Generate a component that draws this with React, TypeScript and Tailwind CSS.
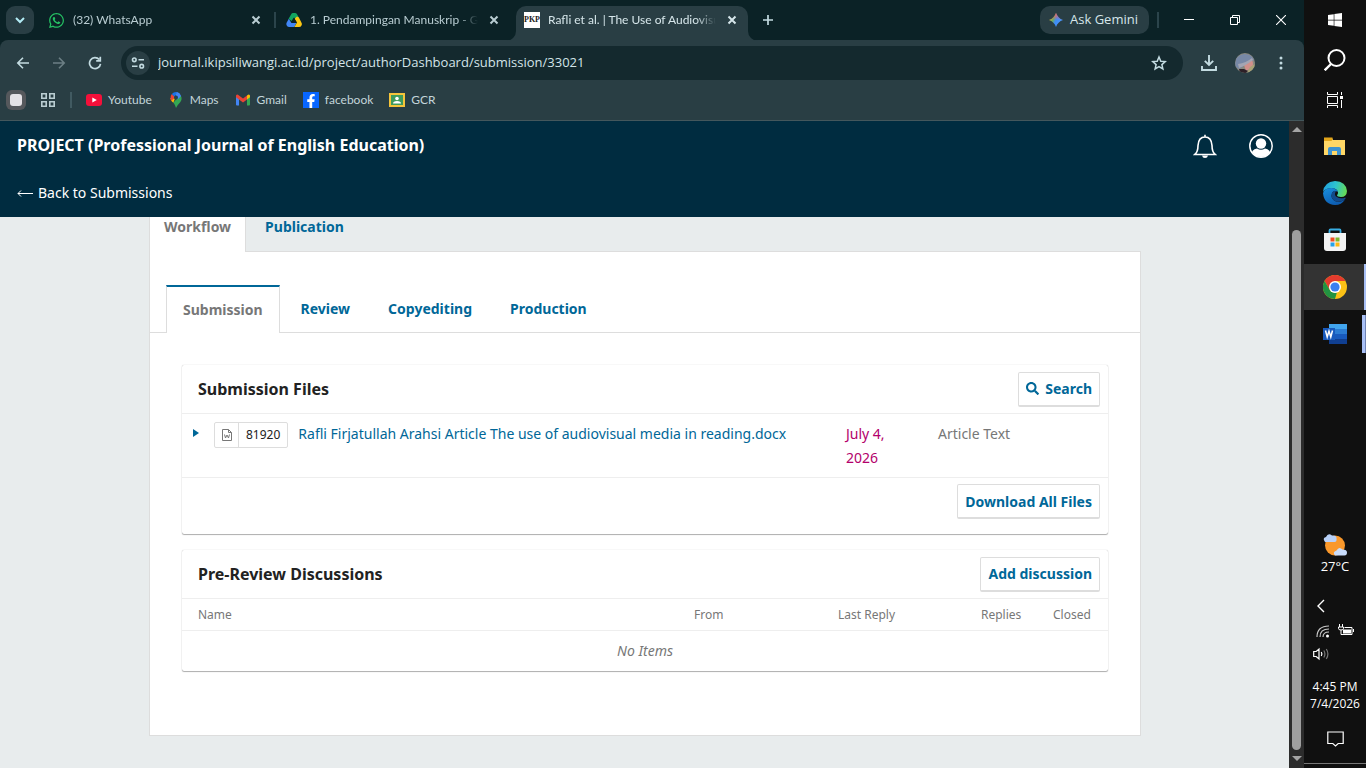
import type { ReactNode } from 'react';
import { FaWhatsapp, FaWindows, FaFacebookF, FaSearch } from 'react-icons/fa';

const ui = "font-['Open_Sans','Noto_Sans',sans-serif]";

function CloseX() {
  return (
    <svg viewBox="0 0 16 16" className="size-4" fill="none" stroke="currentColor" strokeWidth="2">
      <path d="M4.500 4.500l7 7M11.500 4.500l-7 7" />
    </svg>
  );
}

function DriveIcon() {
  return (
    <svg viewBox="0 0 16 16" className="size-4">
      <path d="M5.2 2.2Q5.7 1 7 1h2q1.3 0 2 1.2l2 3.5-3 1.8L8 5.5 5.5 9 2.6 6.8z" fill="#12a560" />
      <path d="M2.8 6.7L.6 10.7Q0 12 .6 13.2 1.2 15 3 15h5.4l2-4H5.5z" fill="#4186f5" />
      <path d="M12.9 5.5l2.6 5.2q.8 1.4 0 2.7-.7 1.6-2.5 1.6H8.4L11 10.5 8.6 6.7 11 4.6z" fill="#fcc713" />
      <path d="M8 5.8l2.6 4.7H5.5z" fill="#0b2226" />
    </svg>
  );
}

function PkpIcon() {
  return (
    <span className="flex h-4 w-4 items-center justify-center bg-white font-['Liberation_Serif',serif] text-[8px] font-bold leading-4 text-[#222]">
      PKP
    </span>
  );
}

function Tab({ icon, title, active = false }: { icon: ReactNode; title: string; active?: boolean }) {
  return (
    <div
      className={
        active
          ? 'relative mt-1.5 flex h-[35px] w-[232px] items-center gap-2 rounded-t-[10px] bg-[#293e44] px-2 pb-[7px] text-[#d6e6ea]'
          : 'flex h-10 w-[232px] items-center gap-2 px-2 text-[#b9cdd2]'
      }
    >
      {active && (
        <>
          <svg viewBox="0 0 10 10" className="absolute -left-2.5 bottom-0 size-2.5"><path d="M10 0v10H0A10 10 0 0 0 10 0z" fill="#293e44" /></svg>
          <svg viewBox="0 0 10 10" className="absolute -right-2.5 bottom-0 size-2.5"><path d="M0 0v10h10A10 10 0 0 1 0 0z" fill="#293e44" /></svg>
        </>
      )}
      <span className="shrink-0">{icon}</span>
      <span className="min-w-0 flex-1 overflow-hidden whitespace-nowrap [mask-image:linear-gradient(to_right,black_148px,transparent)]">{title}</span>
      <button aria-label={`Close ${title}`}><CloseX /></button>
    </div>
  );
}

function TabStrip() {
  return (
    <div className="flex h-10 items-start bg-[#0b2226] pl-1.5 font-['Lato','Open_Sans',sans-serif] text-[12px]">
      <button aria-label="Search tabs" className="mr-1.5 mt-1.5 flex size-7 shrink-0 items-center justify-center rounded-[9px] bg-[#293e44] text-[#b3ecf5]">
        <svg viewBox="0 0 12 12" className="size-3" fill="none" stroke="currentColor" strokeWidth="2"><path d="M2 4l4 4 4-4" /></svg>
      </button>
      <Tab icon={<FaWhatsapp className="size-[17px] text-[#25c063]" />} title="(32) WhatsApp" />
      <span className="mx-0.5 mt-3 h-4 w-0.5 bg-[#2b444b]" />
      <Tab icon={<DriveIcon />} title="1. Pendampingan Manuskrip - G" />
      <span className="w-1.5" />
      <Tab active icon={<PkpIcon />} title="Rafli et al. | The Use of Audiovisu" />
      <button aria-label="New tab" className="ml-1.5 mt-1.5 flex size-7 items-center justify-center text-[#c3dbe1]">
        <svg viewBox="0 0 12 12" className="size-3" stroke="currentColor" strokeWidth="1.7"><path d="M6 1v10M1 6h10" /></svg>
      </button>
      <button className={`ml-auto mt-1.5 flex h-7 items-center gap-1.5 whitespace-nowrap rounded-[10px] bg-[#293e44] pl-2 pr-[11px] text-[13px] text-[#d6e6ea] ${ui}`}>
        <svg viewBox="0 0 16 16" className="size-4">
          <defs>
            <linearGradient id="gem" x1="0" y1="0.3" x2="1" y2="0.7">
              <stop offset="0" stopColor="#f5b82e" /><stop offset=".3" stopColor="#6bab5c" /><stop offset=".5" stopColor="#3d8bf5" /><stop offset="1" stopColor="#4e9bff" />
            </linearGradient>
            <linearGradient id="gemTop" x1="0" y1="0" x2="0" y2="1">
              <stop offset="0" stopColor="#ff5b6b" /><stop offset=".5" stopColor="#ff5b6b" stopOpacity="0" />
            </linearGradient>
          </defs>
          <path d="M8 1Q9.800 6.200 15 8 9.800 9.800 8 15 6.200 9.800 1 8 6.200 6.200 8 1z" fill="url(#gem)" />
          <path d="M8 1Q9.800 6.200 15 8 9.800 9.800 8 15 6.200 9.800 1 8 6.200 6.200 8 1z" fill="url(#gemTop)" />
        </svg>
        Ask Gemini
      </button>
      <span className="ml-2 mr-[7px] mt-3 h-4 w-0.5 bg-[#2b444b]" />
      <button aria-label="Minimize" className="flex h-10 w-[46px] items-center justify-center text-white">
        <svg viewBox="0 0 10 10" className="size-2.5" stroke="currentColor"><path d="M0 4.500h10" /></svg>
      </button>
      <button aria-label="Restore" className="flex h-10 w-[46px] items-center justify-center text-white">
        <svg viewBox="0 0 10 10" className="size-2.5" fill="none" stroke="currentColor"><path d="M.5 2.500h7v7h-7zM2.500 2.500v-2h7v7h-2" /></svg>
      </button>
      <button aria-label="Close window" className="flex h-10 w-[46px] items-center justify-center text-white">
        <svg viewBox="0 0 10 10" className="size-2.5" stroke="currentColor" strokeWidth="1.100"><path d="M0 0l10 10M10 0L0 10" /></svg>
      </button>
    </div>
  );
}

function RoundButton({ label, children, dim = false }: { label: string; children: ReactNode; dim?: boolean }) {
  return (
    <button aria-label={label} className={dim ? 'flex size-7 items-center justify-center text-[#6c7f85]' : 'flex size-7 items-center justify-center text-[#c3dbe1]'}>
      {children}
    </button>
  );
}

function Toolbar() {
  return (
    <div className="flex h-[46px] items-center gap-2 pl-[9px] pr-[9px]">
      <RoundButton label="Back">
        <svg viewBox="0 0 14 14" className="size-3.5" fill="none" stroke="currentColor" strokeWidth="1.600"><path d="M13 7H2M7 1.800L1.800 7 7 12.200" /></svg>
      </RoundButton>
      <RoundButton label="Forward" dim>
        <svg viewBox="0 0 14 14" className="size-3.5" fill="none" stroke="currentColor" strokeWidth="1.600"><path d="M1 7h11M7 1.800L12.200 7 7 12.200" /></svg>
      </RoundButton>
      <RoundButton label="Reload">
        <svg viewBox="0 0 14 14" className="size-3.5" fill="none" stroke="currentColor" strokeWidth="1.700"><path d="M11.200 3.500A5.500 5.500 0 1 0 12.500 7.800M12.300 .8v4H8.200" /></svg>
      </RoundButton>
      <div className="ml-1 mr-1 flex h-[34px] min-w-0 flex-1 items-center rounded-full bg-[#14292e] pl-[5px] pr-2.5">
        <button aria-label="Site information" className="flex size-6 shrink-0 items-center justify-center rounded-full bg-[#293e44] text-[#c3dbe1]">
          <svg viewBox="0 0 14 14" className="size-3.5" fill="none" stroke="currentColor" strokeWidth="1.600">
            <circle cx="3.300" cy="3.800" r="1.800" /><path d="M7.500 3.800H13M1 10.200h5.500" /><circle cx="10.700" cy="10.200" r="1.800" />
          </svg>
        </button>
        <input aria-label="Address" className="ml-2 min-w-0 flex-1 bg-transparent text-[13px] text-[#d3e4e8] outline-none" defaultValue="journal.ikipsiliwangi.ac.id/project/authorDashboard/submission/33021" />
        <button aria-label="Bookmark this page" className="mr-1.5 text-[#c3dbe1]">
          <svg viewBox="0 0 16 16" className="size-4" fill="none" stroke="currentColor" strokeWidth="1.500"><path d="M8 2l1.800 4.200 4.500.4-3.400 3 1 4.400L8 11.700 4.100 14l1-4.400-3.400-3 4.500-.4z" /></svg>
        </button>
      </div>
      <RoundButton label="Downloads">
        <svg viewBox="0 0 16 16" className="size-4" fill="none" stroke="currentColor" strokeWidth="1.900"><path d="M8 0v9.500M3.800 5.800L8 10l4.200-4.200M1 11v4h14v-4" /></svg>
      </RoundButton>
      <RoundButton label="Profile">
        <svg viewBox="0 0 20 20" className="size-5">
          <defs><clipPath id="av"><circle cx="10" cy="10" r="10" /></clipPath></defs>
          <g clipPath="url(#av)">
            <path d="M0 0h20v20H0z" fill="#8a8980" />
            <path d="M0 13Q0 2 9 1q8 0 10 6L10 12 4 16z" fill="#7788a6" />
            <path d="M9 12l8-5q2 4 0 8l-6 3z" fill="#d0908b" />
            <path d="M3 11q8-1 14-6l1 2Q10 13 4 15z" fill="#a3a5b3" />
            <path d="M4 16l5 0 4 2-2 2H5z" fill="#2d2027" />
            <path d="M15 14l5-3v9h-8z" fill="#a8a276" />
          </g>
        </svg>
      </RoundButton>
      <RoundButton label="Menu">
        <svg viewBox="0 0 14 14" className="size-3.5" fill="currentColor"><circle cx="7" cy="2" r="1.500" /><circle cx="7" cy="7" r="1.500" /><circle cx="7" cy="12" r="1.500" /></svg>
      </RoundButton>
    </div>
  );
}

function Bookmark({ icon, label }: { icon: ReactNode; label: string }) {
  return <a href="#bookmark" className="flex items-center gap-1.5">{icon}{label}</a>;
}

function Bookmarks() {
  return (
    <nav aria-label="Bookmarks" className="flex h-[35px] items-center border-b border-[#44575c] pb-1.5 pl-1.5 font-['Lato','Open_Sans',sans-serif] text-[12px] text-[#c3d5da]">
      <span className="flex size-5 items-center justify-center rounded-[6px] bg-[#55585c]"><span className="size-3 rounded-[3px] bg-[#e4e2e6]" /></span>
      <svg viewBox="0 0 14 14" className="ml-[15px] size-3.5" fill="none" stroke="#b9cdd2" strokeWidth="1.600"><path d="M.8.8h4.400v4.400H.8zM8.800.8h4.400v4.400H8.800zM.8 8.800h4.400v4.400H.8zM8.800 8.800h4.400v4.400H8.800z" /></svg>
      <span className="ml-[15px] mr-3.5 h-4 w-0.5 bg-[#415a61]" />
      <div className="flex gap-4">
        <Bookmark label="Youtube" icon={<svg viewBox="0 0 16 16" className="size-4"><rect y="2" width="16" height="12" rx="3" fill="#f5103a" /><path d="M6.300 5.500v5L10.800 8z" fill="#fff" /></svg>} />
        <Bookmark label="Maps" icon={
          <svg viewBox="0 0 16 16" className="size-4">
            <path d="M8 16c-.6-2.500-1.500-3.800-2.700-5.300L11.500 3.500 13 4q1.500 3.500-.8 6.300Q9 13.500 8 16z" fill="#34a853" />
            <path d="M2.500 6L7 6.500 5.300 10.700Q2.200 8 2.500 6z" fill="#fbbc04" />
            <path d="M3.800 2l3.200 2.700L3.500 9Q1.600 5 3.800 2z" fill="#ea4335" />
            <path d="M3.800 2Q6-.4 9.500.2L6.500 4.800z" fill="#1a73e8" />
            <path d="M9 .1q3 .6 4.100 3.900L9.600 7.500 7.500 3z" fill="#4285f4" />
            <circle cx="8" cy="5.500" r="2" fill="#24444c" />
          </svg>} />
        <Bookmark label="Gmail" icon={
          <svg viewBox="0 0 16 16" className="size-4">
            <path d="M1 4.500l3 2.300V13.500H2q-1 0-1-1z" fill="#4285f4" />
            <path d="M15 4.500l-3 2.300v6.700h2q1 0 1-1z" fill="#34a853" />
            <path d="M12 3.500l1-.7q1.200-.6 2 .8v1.600l-3 2.300z" fill="#fbbc04" />
            <path d="M1 5.200V3.600q.8-1.400 2-.8l5 3.800 4-3v3.900L8 10.500z" fill="#ea4335" />
          </svg>} />
        <Bookmark label="facebook" icon={<span className="flex size-4 items-end justify-center bg-[#0866ff]"><FaFacebookF className="size-3.5 text-white" /></span>} />
        <Bookmark label="GCR" icon={
          <svg viewBox="0 0 16 16" className="size-4"><path d="M0 1h16v14H0z" fill="#f5c43a" /><path d="M2 3h12v10H2z" fill="#3f9a5c" /><circle cx="8" cy="6.500" r="1.800" fill="#fff" /><path d="M4 11.500q0-2.500 4-2.500t4 2.500z" fill="#fff" /></svg>} />
      </div>
    </nav>
  );
}

function SiteHeader() {
  return (
    <header className="flex h-24 shrink-0 justify-between bg-[#002c40] pl-[17px] text-white">
      <div>
        <h1 className="mt-3 text-[16px] font-bold leading-6">PROJECT (Professional Journal of English Education)</h1>
        <a href="#submissions" className="mt-6 flex items-center gap-[5px] text-[14px] leading-6">
          <svg viewBox="0 0 16 10" className="h-2.5 w-4" fill="none" stroke="currentColor"><path d="M16 5.500H1M4 2.500L1 5.500 4 8.500" /></svg>
          Back to Submissions
        </a>
      </div>
      <div className="mr-4 mt-[13px] flex gap-8">
        <button aria-label="Tasks" className="size-6">
          <svg viewBox="0 0 24 24" className="size-6" fill="none" stroke="currentColor" strokeWidth="1.600"><path d="M12 .8v2M1.800 20.500h20.400Q19 18 19 11.500 18.500 3 12 3t-7 8.500Q5 18 1.800 20.500z" /><path d="M9 21.500h6q-.5 2.500-3 2.500t-3-2.500z" fill="currentColor" stroke="none" /></svg>
        </button>
        <button aria-label="Account" className="size-6">
          <svg viewBox="0 0 24 24" className="size-6"><defs><clipPath id="usr"><circle cx="12" cy="12" r="11" /></clipPath></defs><circle cx="12" cy="12" r="11.200" fill="none" stroke="#fff" strokeWidth="1.500" /><circle cx="12" cy="9.500" r="5.200" fill="#fff" /><path d="M2 24q0-9 6-9.500 4 2.500 8 0 6 .5 6 9.500z" fill="#fff" clipPath="url(#usr)" /></svg>
        </button>
      </div>
    </header>
  );
}

function ActionButton({ children }: { children: ReactNode }) {
  return (
    <button className="flex h-[35px] items-center gap-1.5 rounded-[2px] border border-b-2 border-[#ddd] bg-white px-[7px] text-[14px] font-bold text-[#006798]">
      {children}
    </button>
  );
}

const card = 'rounded-[2px] bg-white shadow-[0_0_1px_rgba(0,0,0,0.3),0_1px_1px_rgba(0,0,0,0.3)]';
const cardHead = 'flex h-12 items-center justify-between pl-4 pr-2';

function SubmissionFiles() {
  return (
    <section className={card}>
      <div className={cardHead}>
        <h2 className="text-[16px] font-bold text-[#222]">Submission Files</h2>
        <ActionButton><FaSearch className="size-[13px]" />Search</ActionButton>
      </div>
      <table className="w-full table-fixed text-[14px] leading-6">
        <colgroup><col /><col className="w-[92px]" /><col className="w-[186px]" /></colgroup>
        <tbody>
          <tr className="h-16 border-y border-[#eee] align-top">
            <td className="pt-2">
              <div className="flex items-start">
                <button aria-label="Show file details" className="ml-2.5 mt-[7px] h-2"><svg viewBox="0 0 8 8" className="size-2"><path d="M1 0l6 4-6 4z" fill="#006798" /></svg></button>
                <span className="ml-3.5 flex h-[26px] shrink-0 items-center rounded-[2px] border border-[#ddd] text-[12px] text-[#222]">
                  <span className="flex h-full w-6 items-center justify-center border-r border-[#ddd]">
                    <svg viewBox="0 0 12 12" className="size-3" fill="none" stroke="#777"><path d="M1.500.5h6l3 3v8h-9zM7.500.5v3h3" /><path d="M3.500 5.500l1 3.500 1.500-3 1.500 3 1-3.500" /></svg>
                  </span>
                  <span className="px-[7px]">81920</span>
                </span>
                <a href="#file" className="ml-2.5 whitespace-nowrap text-[#006798]">Rafli Firjatullah Arahsi Article The use of audiovisual media in reading.docx</a>
              </div>
            </td>
            <td className="px-4 pt-2 text-[#b3006b]">July 4, 2026</td>
            <td className="px-4 pt-2 text-[#777]">Article Text</td>
          </tr>
        </tbody>
      </table>
      <div className="flex justify-end pb-[15px] pr-2 pt-1.5"><ActionButton>Download All Files</ActionButton></div>
    </section>
  );
}

function Discussions() {
  return (
    <section className={card}>
      <div className={cardHead}>
        <h2 className="text-[16px] font-bold text-[#222]">Pre-Review Discussions</h2>
        <ActionButton>Add discussion</ActionButton>
      </div>
      <table className="w-full table-fixed text-[#777]">
        <colgroup><col /><col className="w-36" /><col className="w-[143px]" /><col className="w-[72px]" /><col className="w-[71px]" /></colgroup>
        <thead>
          <tr className="h-8 border-y border-[#eee] text-left text-[12px]">
            <th className="px-4 font-normal">Name</th>
            <th className="px-4 font-normal">From</th>
            <th className="px-4 font-normal">Last Reply</th>
            <th className="px-4 font-normal">Replies</th>
            <th className="px-4 font-normal">Closed</th>
          </tr>
        </thead>
        <tbody>
          <tr className="h-10 text-center text-[14px] italic"><td colSpan={5}>No Items</td></tr>
        </tbody>
      </table>
    </section>
  );
}

function Workflow() {
  return (
    <main className="min-h-0 flex-1 overflow-hidden bg-[#e8eced] pl-px">
      <div className="mx-auto max-w-[992px]">
        <div role="tablist" className="flex h-[35px] text-[14px] font-bold leading-5">
          <button role="tab" aria-selected="true" className="border-x border-[#ddd] bg-white px-3.5 pb-[15px] text-[#777]">Workflow</button>
          <div className="flex-1 border-b border-[#ddd]"><button role="tab" className="px-[19px] text-[#006798]">Publication</button></div>
        </div>
        <div className="border border-t-0 border-[#ddd] bg-white pb-16">
          <div role="tablist" className="flex pt-[33px] text-[14px] font-bold">
            <span className="w-4 border-b border-[#ddd]" />
            <button role="tab" aria-selected="true" className="h-12 border-x border-t-2 border-x-[#ddd] border-t-[#006798] px-4 pb-0.5 text-[#777]">Submission</button>
            <div className="flex flex-1 gap-[38px] border-b border-[#ddd] pl-[21px] text-[#006798]">
              <button role="tab">Review</button>
              <button role="tab">Copyediting</button>
              <button role="tab">Production</button>
            </div>
          </div>
          <div className="flex flex-col gap-4 px-8 pt-8">
            <SubmissionFiles />
            <Discussions />
          </div>
        </div>
      </div>
    </main>
  );
}

function ScrollRail() {
  return (
    <div className="flex w-[15px] shrink-0 flex-col items-center bg-[#2c2c2c]">
      <svg viewBox="0 0 10 5" className="mt-1.5 h-[5px] w-2.5"><path d="M0 5l5-5 5 5z" fill="#a5a5a5" /></svg>
      <div className="mt-[98px] w-[9px] flex-1 rounded-full bg-[#9f9f9f]" />
      <svg viewBox="0 0 10 5" className="mb-[7px] mt-1.5 h-[5px] w-2.5"><path d="M0 0l5 5 5-5z" fill="#a5a5a5" /></svg>
    </div>
  );
}

function TaskItem({ label, children, state = 'idle' }: { label: string; children: ReactNode; state?: 'idle' | 'active' | 'open' }) {
  return (
    <button aria-label={label} className={state === 'active' ? 'flex h-[46px] w-full items-center bg-[#333] pl-[19px]' : 'flex h-[46px] w-full items-center pl-[19px]'}>
      {children}
      {state === 'active' && <span className="ml-auto h-full w-0.5 bg-[#a9c0f5]" />}
      {state === 'open' && <span className="ml-auto flex h-[38px] w-1 border-r border-[#6f83b3] bg-[#a9c0f5]" />}
    </button>
  );
}

function Taskbar() {
  return (
    <aside className={`flex w-[62px] shrink-0 flex-col items-center bg-[#101010] text-white ${ui}`}>
      <button aria-label="Start" className="flex h-10 w-full items-center justify-center"><FaWindows className="size-4" /></button>
      <button aria-label="Search" className="flex h-10 w-full items-center justify-center">
        <svg viewBox="0 0 22 22" className="size-[22px]" fill="none" stroke="currentColor" strokeWidth="2"><circle cx="12.500" cy="9" r="8" /><path d="M7 15l-6.300 6.300" strokeWidth="2.400" /></svg>
      </button>
      <button aria-label="Task view" className="flex h-10 w-full items-center justify-center">
        <svg viewBox="0 0 16 16" className="size-4" fill="none" stroke="currentColor"><path d="M.5 4.500h10v7H.5zM.5 0v2.500h10V0M.5 16v-2.500h10V16M14.500 0v3M14.500 8v8" /><path d="M13 4h3v3h-3z" fill="currentColor" stroke="none" /></svg>
      </button>
      <div className="mt-[3px] flex w-full flex-col gap-px">
        <TaskItem label="File Explorer">
          <svg viewBox="0 0 24 24" className="size-6"><path d="M1 4h8l1 2h12v15H1z" fill="#ffd766" /><path d="M1 3.500h8.500v2L8.500 7H1z" fill="#e3a51a" /><path d="M5 21v-6q0-2 2-2h9q2 0 2 2v6h-4v-4H9v4z" fill="#3d93d1" /></svg>
        </TaskItem>
        <TaskItem label="Edge">
          <svg viewBox="0 0 24 24" className="size-6">
            <defs>
              <linearGradient id="eg" x1="0" y1="0.3" x2="1" y2="0.500"><stop offset="0" stopColor="#209fde" /><stop offset=".5" stopColor="#2dc3cf" /><stop offset="1" stopColor="#66db55" /></linearGradient>
              <linearGradient id="eb" x1="0" y1="0" x2="0.5" y2="1"><stop offset="0" stopColor="#1990df" /><stop offset="1" stopColor="#0d5cb0" /></linearGradient>
            </defs>
            <path d="M0 11Q1 1 12 0 23 .5 24 10q-.3 6-6 6-3.800 0-4-1.700 1.300-1.500 1-3Q14 7.500 9 7 3 7 0 11z" fill="url(#eg)" />
            <path d="M0 12Q2 7 8.500 7q5 .3 6.300 4Q11 8.800 9 12q-2 6 4 8.500 4.500 1.300 9-2Q18.500 24 12 24 1 23.500 0 12z" fill="url(#eb)" />
            <path d="M9 12q1.500-3 4-2-2.500 4 .8 6 4 2.300 8.500.4.500.6 0 1.500Q18.500 21.500 13 20.500 7 18 9 12z" fill="#114a8b" />
          </svg>
        </TaskItem>
        <TaskItem label="Store">
          <svg viewBox="0 0 24 24" className="size-6"><path d="M6.500 6V2.500q0-1 1-1h9q1 0 1 1V6" fill="none" stroke="#38aee4" strokeWidth="1.800" /><path d="M1 5h22v15q0 3-3 3H4q-3 0-3-3z" fill="#f4f4f4" /><path d="M7.500 9.500h4v4h-4z" fill="#f04f22" /><path d="M12.500 9.500h4v4h-4z" fill="#7db72b" /><path d="M7.500 14.500h4v4h-4z" fill="#26a2e8" /><path d="M12.500 14.500h4v4h-4z" fill="#fdb913" /></svg>
        </TaskItem>
        <TaskItem label="Chrome" state="active">
          <svg viewBox="0 0 24 24" className="size-6"><circle cx="12" cy="12" r="12" fill="#fbc116" /><path d="M1.600 6A12 12 0 0 1 22.400 6H12L6.800 15z" fill="#e33b2e" /><path d="M1.600 6L6.800 15q2 3.300 7 2.700L12 24A12 12 0 0 1 1.600 6z" fill="#229342" /><circle cx="12" cy="12" r="6" fill="#fff" /><circle cx="12" cy="12" r="4.600" fill="#3a7ff0" /></svg>
        </TaskItem>
        <TaskItem label="Word" state="open">
          <svg viewBox="0 0 24 24" className="size-6"><path d="M6 2h18v5.500H6z" fill="#41a5ee" /><path d="M6 7h18v5H6z" fill="#2b7cd3" /><path d="M6 12h18v5.500H6z" fill="#185abd" /><path d="M6 17h18v5H6z" fill="#103f91" /><path d="M0 6h12v12H0z" fill="#185abd" /><path d="M2.500 8.500l1.700 6.500L6 9l1.800 6 1.700-6.500" fill="none" stroke="#fff" strokeWidth="1.500" /></svg>
        </TaskItem>
      </div>
      <div className="mt-auto flex w-full flex-col items-center">
        <svg viewBox="0 0 24 24" className="size-6">
          <circle cx="12" cy="12.500" r="10" fill="#f9982b" />
          <path d="M2 9q-3-4 1-5 2-4.500 6-1.500 5-.5 4.500 3.500.5 3-2 3z" fill="#b7d0f8" />
          <path d="M12 22.500q-3-3.500 1.500-5 2.500-4.500 6-1 4.500 0 4.500 3 0 3-2.500 3z" fill="#c9dcfb" />
        </svg>
        <span className="text-[13px] leading-[18px]">27°C</span>
        <button aria-label="Show hidden icons" className="mr-7 mt-6"><svg viewBox="0 0 8 14" className="h-3.5 w-2" fill="none" stroke="currentColor" strokeWidth="1.400"><path d="M7 1L1 7l6 6" /></svg></button>
        <div className="mt-[11px] flex gap-2">
          <svg viewBox="0 0 14 14" className="size-3.5" fill="none" stroke="currentColor"><path d="M1 13Q1 2 13 2M4 13q0-8 9-8M7 13q0-5 6-5" stroke="#c8c8c8" strokeWidth="1.200" /><circle cx="11.500" cy="12" r="1.500" fill="currentColor" stroke="none" /></svg>
          <svg viewBox="0 0 16 12" className="h-3 w-4" fill="none" stroke="currentColor"><path d="M1.500 0v3M4.500 0v3M.5 3h5v1.500Q5.500 6 3 6 .5 6 .5 4.500zM3 6v4.500h11v-7H6.500M15.500 5v3" /><path d="M5 5.500h8v4H5z" fill="currentColor" stroke="none" /></svg>
        </div>
        <svg viewBox="0 0 17 14" className="mr-7 mt-[9px] h-3.5 w-[17px]" fill="none" stroke="currentColor" strokeWidth="1.200"><path d="M.7 4.500h2.500L6 2v10L3.200 9.500H.7zM8.300 5q1.200 2 0 4" /><path d="M10.800 3.500q2.200 3.500 0 7M13.300 2q3.200 5 0 10" stroke="#777" /></svg>
        <span className="mt-[17px] whitespace-nowrap text-center text-[12px] leading-[17px]">4:45 PM<br />7/4/2026</span>
        <button aria-label="Notifications" className="mt-[19px]"><svg viewBox="0 0 17 17" className="size-[17px]" fill="none" stroke="currentColor" strokeWidth="1.200"><path d="M.8 1h15.400v11.500h-5L8.500 15l-2.700-2.500h-5z" /></svg></button>
        <span className="mt-[15px] h-[5px] w-full border-t border-[#777]" />
      </div>
    </aside>
  );
}

export default function App() {
  return (
    <div className="flex h-screen overflow-hidden bg-[#101010]">
      <div className="flex min-w-0 flex-1 flex-col">
        <div className={`shrink-0 bg-[#0b2226] ${ui}`}>
          <TabStrip />
          <div className="rounded-t-lg bg-[#293e44]">
            <Toolbar />
            <Bookmarks />
          </div>
        </div>
        <div className="flex min-h-0 flex-1">
          <div className="flex min-w-0 flex-1 flex-col font-['Noto_Sans',sans-serif]">
            <SiteHeader />
            <Workflow />
          </div>
          <ScrollRail />
        </div>
      </div>
      <Taskbar />
    </div>
  );
}
